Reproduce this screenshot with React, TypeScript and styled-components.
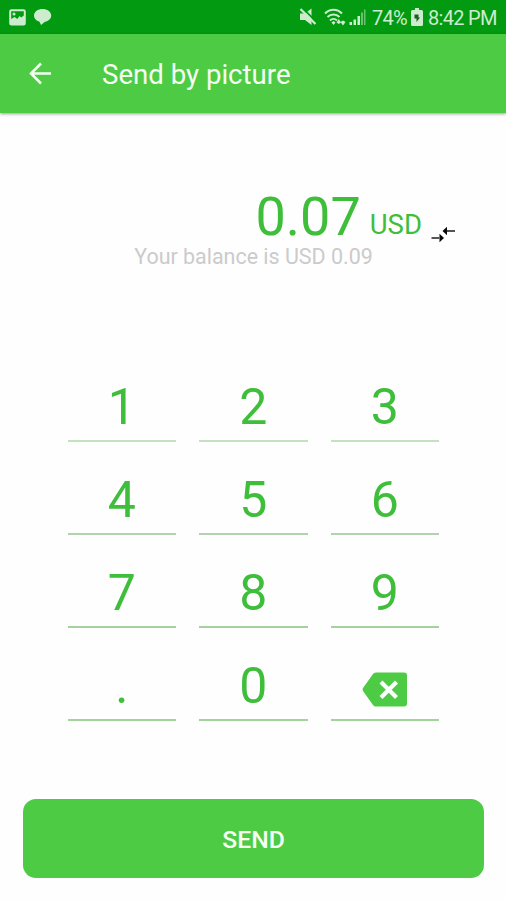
import React from "react";
import styled, { createGlobalStyle } from "styled-components";

const GlobalStyle = createGlobalStyle`
  * { box-sizing: border-box; }
  body { margin: 0; background: #fefefe; font-family: Roboto, "Liberation Sans", sans-serif; }
  button { font: inherit; border: 0; padding: 0; margin: 0; background: none; }
`;

const Screen = styled.div`
  display: flex;
  flex-direction: column;
  width: 506px;
  height: 900px;
  overflow: hidden;
  background: #fefefe;
`;

const StatusBar = styled.div`
  display: flex;
  align-items: center;
  flex: 0 0 34px;
  padding: 0 10px 0 9px;
  background: #029a10;
  color: #cdebcd;
`;

const Notifications = styled.div`
  display: flex;
  align-items: center;
  gap: 7px;
`;

const SystemInfo = styled.div`
  display: flex;
  align-items: center;
  margin-left: auto;
`;

const StatusText = styled.span<{ $width: number }>`
  width: ${(p) => p.$width}px;
  font-size: 20px;
  line-height: 31px;
  padding-top: 3px;
  white-space: nowrap;
  letter-spacing: -0.7px;
`;

const StatusIcon = styled.svg<{ $right?: number }>`
  display: block;
  flex: none;
  margin-right: ${(p) => p.$right ?? 0}px;
`;

const AppBar = styled.header`
  display: flex;
  align-items: center;
  flex: 0 0 78.5px;
  padding-left: 28px;
  background: #4dcb45;
  box-shadow: 0 1px 3px rgba(60, 30, 30, 0.45);
  color: #f4fff2;
`;

const BackButton = styled.button`
  display: flex;
  width: 74px;
  color: inherit;
`;

const Title = styled.h1`
  margin: 0;
  font-size: 27.6px;
  font-weight: 400;
  line-height: 40px;
  padding-top: 4px;
`;

const AmountRow = styled.div`
  display: flex;
  align-items: baseline;
  justify-content: flex-end;
  height: 64px;
  margin-top: 72.5px;
  padding-right: 50px;
  color: #3fbe3b;
`;

const Amount = styled.span`
  font-size: 54px;
  line-height: 64px;
  margin-right: 9px;
`;

const Currency = styled.span`
  font-size: 27.5px;
  margin-right: 9px;
  transform: translateY(-1px);
`;

const SwapButton = styled.button`
  display: flex;
  align-self: flex-end;
  margin-bottom: 6px;
`;

const Balance = styled.p`
  margin: -5px 0 0;
  padding-left: 1px;
  text-align: center;
  font-size: 21.45px;
  line-height: 26px;
  color: #cbcbcb;
`;

const Keypad = styled.div`
  display: grid;
  grid-template-columns: repeat(3, 108.5px);
  grid-auto-rows: 93px;
  column-gap: 23px;
  margin: 79px 0 0 67.5px;
`;

const Key = styled.button<{ $line: string }>`
  display: flex;
  justify-content: center;
  align-items: flex-start;
  padding-top: 28px;
  border-bottom: 2px solid ${(p) => p.$line};
  font-size: 50px;
  line-height: 60px;
  color: #3fbe3b;
`;

const DeleteIcon = styled.svg`
  display: block;
  margin-top: 16px;
`;

const SendButton = styled.button`
  height: 79px;
  margin: 78px 22px 0 23px;
  border-radius: 13px;
  background: #4dcb45;
  color: #f6fff4;
  font-size: 24.7px;
  font-weight: 500;
  line-height: 77px;
  padding-top: 2px;
`;

const KEY_ROWS = [
  { keys: ["1", "2", "3"], line: "#c5e2c0" },
  { keys: ["4", "5", "6"], line: "#b3d3ae" },
  { keys: ["7", "8", "9"], line: "#a5d19f" },
  { keys: [".", "0", "delete"], line: "#a2d39b" },
];

export default function App() {
  return (
    <Screen>
      <GlobalStyle />
      <StatusBar>
        <Notifications>
          <StatusIcon width="17" height="17" viewBox="0 0 17 17">
            <rect x="1.2" y="1.2" width="14.6" height="14.2" rx="1.2" fill="none" stroke="currentColor" strokeWidth="2" />
            <path d="M2 10 5.800 8l2.400 2 2.500-3 1.500 1.500L15.500 6v9.500H2z" fill="currentColor" />
            <circle cx="5" cy="5" r="1.500" fill="currentColor" />
          </StatusIcon>
          <StatusIcon width="19" height="18" viewBox="0 0 19 18">
            <path d="M9.500 1C4.900 1 1 3.700 1 7.500c0 3 2.500 5.500 5.500 6.200l1.500 3.300 4-3.200c3.600-.7 6.200-3.200 6.200-6.300C18.200 3.700 14.100 1 9.500 1z" fill="currentColor" />
          </StatusIcon>
        </Notifications>
        <SystemInfo>
          <StatusIcon width="18" height="18" viewBox="0 0 18 18" $right={7}>
            <path d="M1 5.500h5l6.500-5v16.500l-6.500-5H1z" fill="currentColor" />
            <path d="M3.500 0 17.500 14" stroke="#029a10" strokeWidth="1.800" />
            <path d="M1.500 1 16.500 16" stroke="currentColor" strokeWidth="2.200" />
          </StatusIcon>
          <StatusIcon width="23" height="20" viewBox="0 0 23 20" $right={2}>
            <g fill="none" stroke="currentColor" strokeWidth="2">
              <path d="M1 6.500C6 1.500 13 1.500 18 6.500M3.500 10c3.500-3.500 8.500-3.500 12 0M6 13.500c2-2 5-2 7 0" />
            </g>
            <path d="m7.500 15.500 2-1.500 2 1.500-2 2.500zM12.500 15.500l2.300-3.500 2.200 3.500-2.200 1.500zM16.500 15l2.500-1.500 2.500 1.500-2.500 3.500z" fill="currentColor" />
          </StatusIcon>
          <StatusIcon width="17" height="18" viewBox="0 0 17 18" $right={6}>
            <path d="M.5 14h2.500v3H.5zM4.500 11.500h2.500V17H4.500zM8.500 8h2.500v9H8.500z" fill="currentColor" />
            <path d="M12 4.500h2V17h-2zM15 1.500h1.500V17H15z" fill="currentColor" opacity=".5" />
          </StatusIcon>
          <StatusText $width={39}>74%</StatusText>
          <StatusIcon width="12" height="18" viewBox="0 0 12 18" $right={5}>
            <path d="M4 0h4v2h2.500q1.500 0 1.500 1.500v13q0 1.500-1.500 1.500h-9Q0 18 0 16.500v-13Q0 2 1.500 2H4z" fill="currentColor" />
            <path d="M3.500 6.500h4v3h1.500l-3.500 4.500v-3.500h-2z" fill="#1c5c20" />
          </StatusIcon>
          <StatusText $width={68}>8:42 PM</StatusText>
        </SystemInfo>
      </StatusBar>
      <AppBar>
        <BackButton aria-label="Back">
          <svg width="24" height="24" viewBox="0 0 24 24" fill="none" stroke="currentColor" strokeWidth="2.500">
            <path d="M23 12.500H3M13 2.500l-10 10 10 10" />
          </svg>
        </BackButton>
        <Title>Send by picture</Title>
      </AppBar>
      <AmountRow>
        <Amount>0.07</Amount>
        <Currency>USD</Currency>
        <SwapButton aria-label="Swap currency">
          <svg width="25" height="18" viewBox="0 0 25 18" fill="#080808">
            <path d="M11.500 6 16 1.800v8.400z" />
            <path d="M13 13 8.500 8.800v8.400z" />
            <path d="M16 6h8M.5 13H8.500" stroke="#555" strokeWidth="2" />
          </svg>
        </SwapButton>
      </AmountRow>
      <Balance>Your balance is USD 0.09</Balance>
      <Keypad>
        {KEY_ROWS.flatMap((row) =>
          row.keys.map((k) => (
            <Key key={k} $line={row.line} aria-label={k}>
              {k === "delete" ? (
                <DeleteIcon width="46" height="35" viewBox="0 0 46 35">
                  <path d="M14 .5h28q3 0 3 3v28q0 3-3 3H14q-2 0-3-1.500L1 19q-1-1.500 0-3L11 2q1-1.500 3-1.500z" fill="#4dcb45" />
                  <path d="m19 10 15.500 15.500M34.500 10 19 25.500" stroke="#fff" strokeWidth="4.200" />
                </DeleteIcon>
              ) : (
                k
              )}
            </Key>
          )),
        )}
      </Keypad>
      <SendButton>SEND</SendButton>
    </Screen>
  );
}
